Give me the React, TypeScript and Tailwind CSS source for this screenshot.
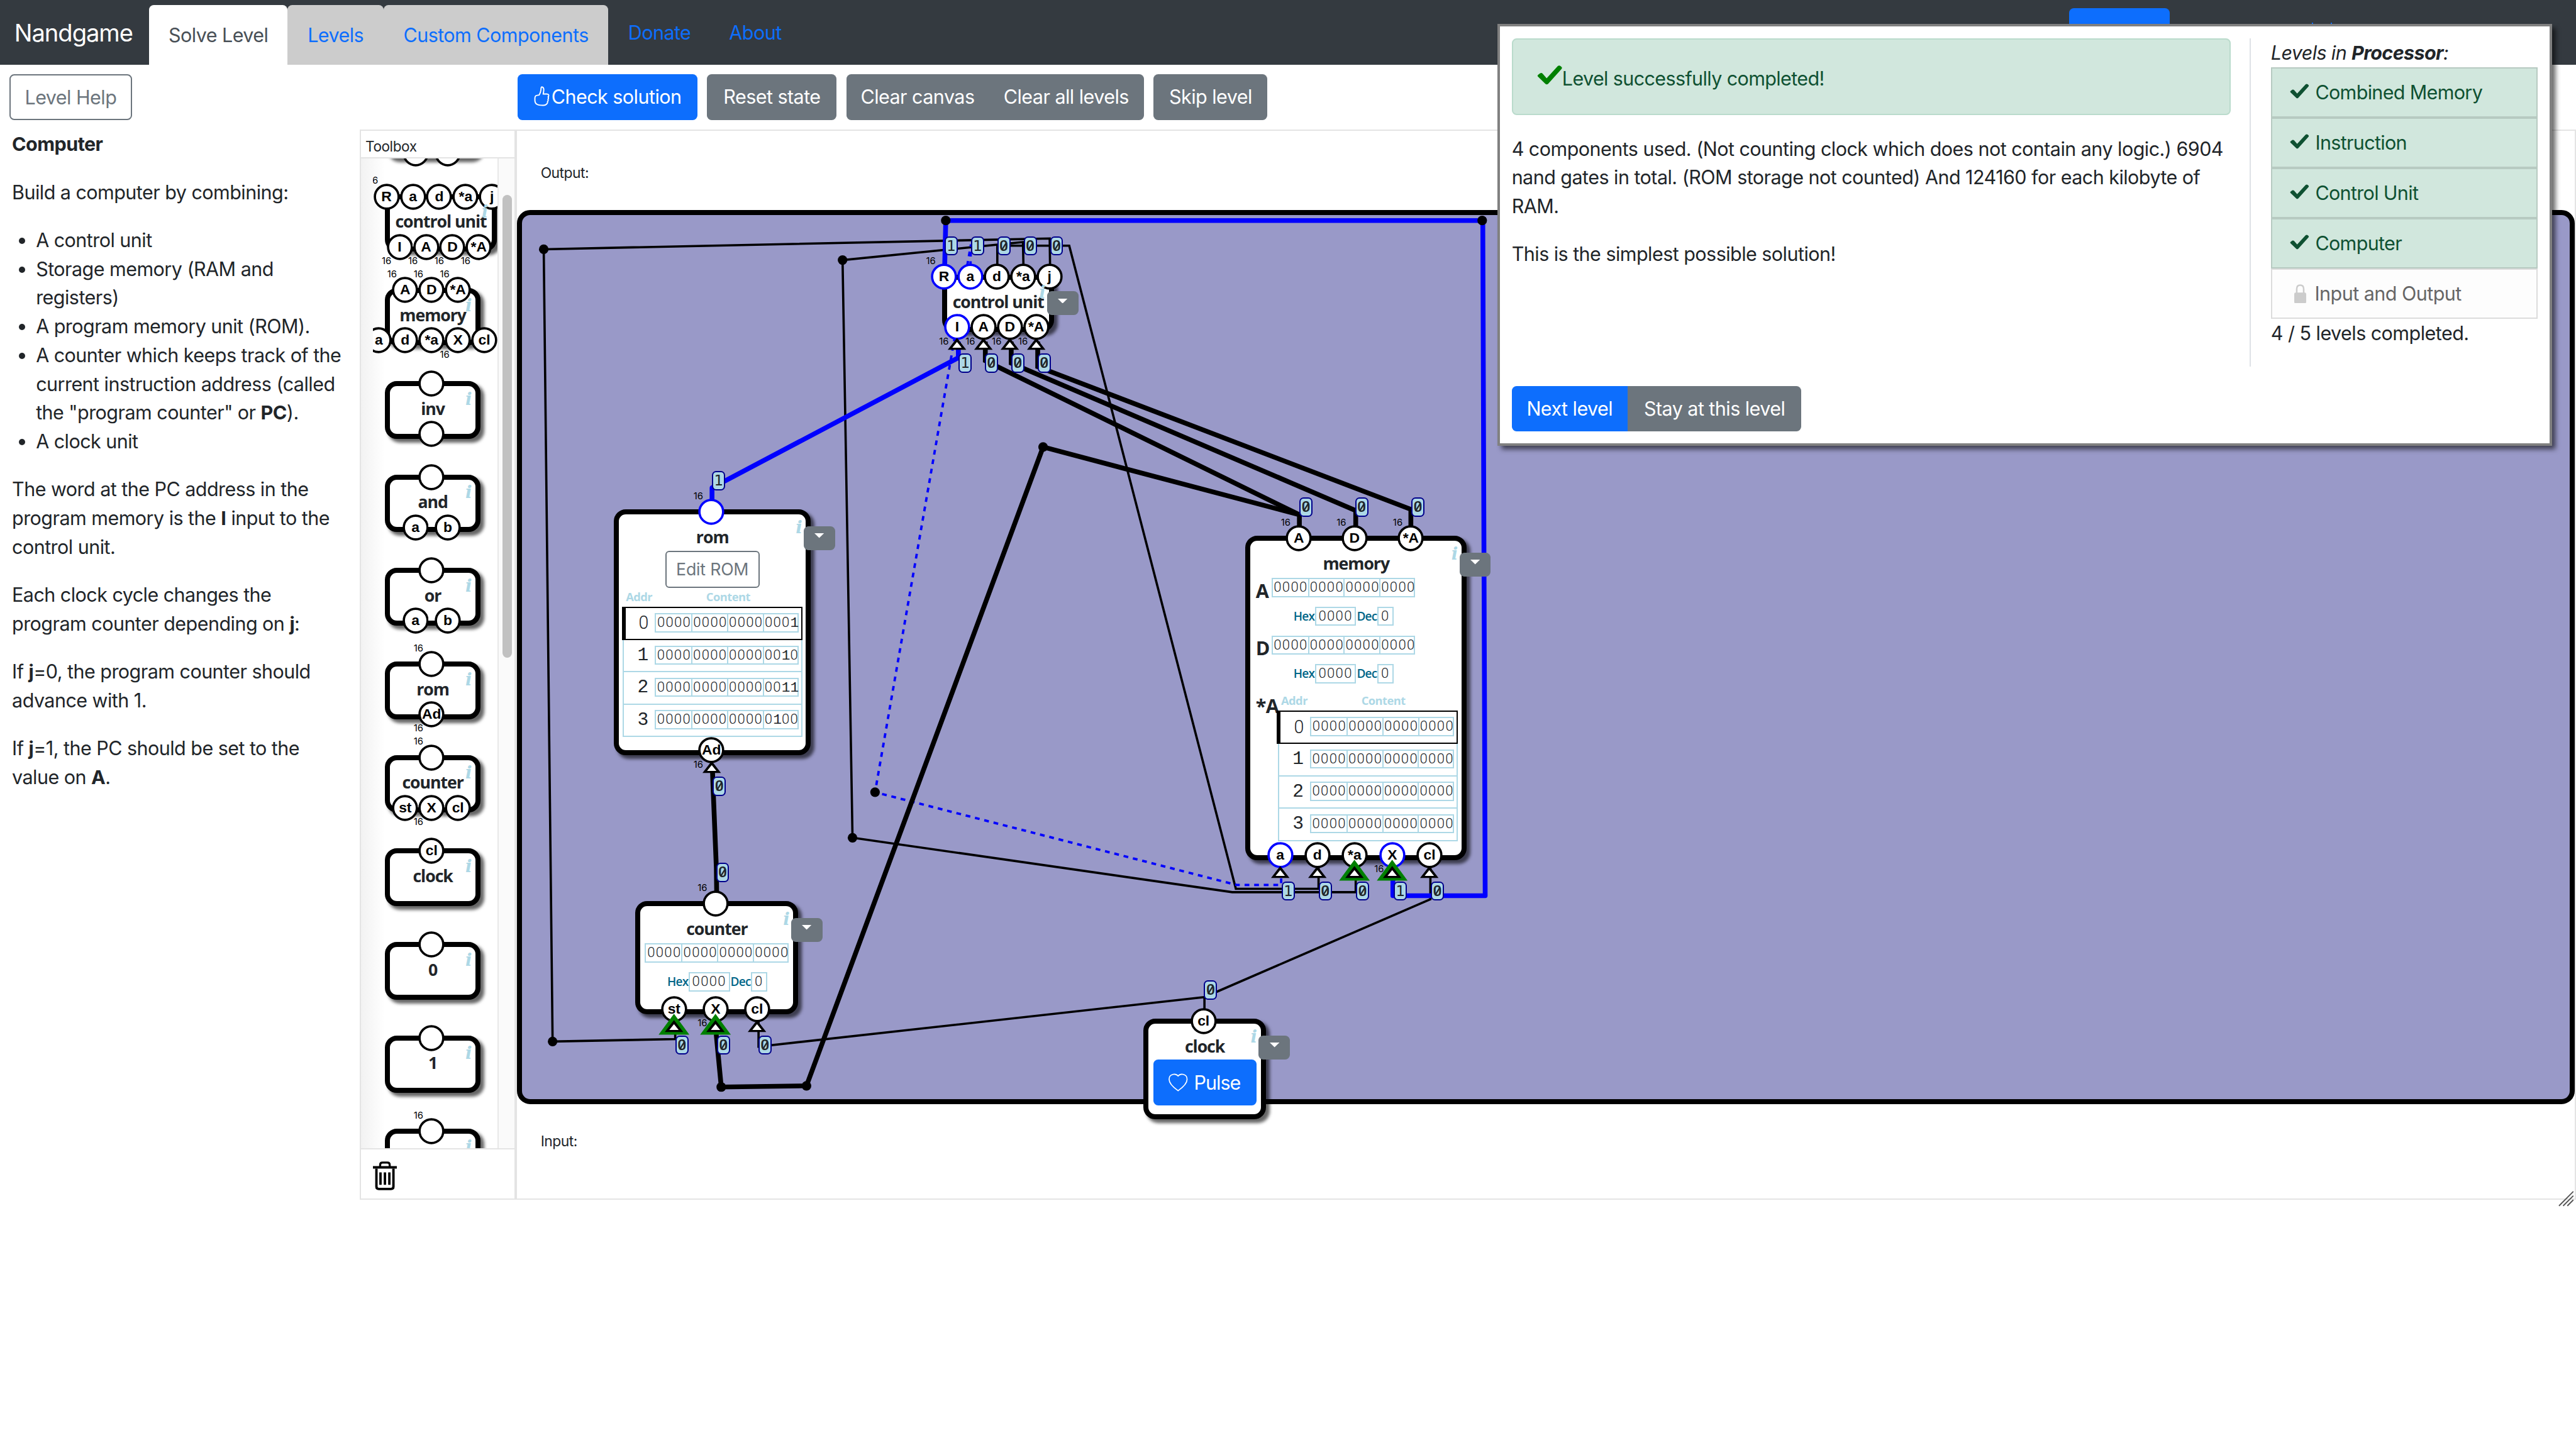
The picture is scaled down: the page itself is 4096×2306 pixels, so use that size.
import React from "react";

type Port = {
  x: number;
  label?: string;
  on?: boolean;
  wide?: boolean;
  badge?: string;
  arrow?: "plain" | "green";
};

function PortMark({ port, y, side }: { port: Port; y: number; side: "top" | "bottom" }) {
  const stroke = port.on ? "#0000ff" : "#000000";
  return (
    <div className="absolute tracking-normal" style={{ left: port.x, top: y }}>
      <div className="absolute -left-[11px] -top-[11px] h-[22px] w-[22px]">
        <svg viewBox="-11 -11 22 22" className="absolute inset-0 h-[22px] w-[22px]">
          <circle r="9.9" fill="#fff" stroke={stroke} strokeWidth="1.9" />
        </svg>
        {port.label && (
          <span className="absolute inset-x-[-4px] top-0 text-center font-['Liberation_Sans'] text-[12px] leading-[22px] font-bold text-black">
            {port.label}
          </span>
        )}
      </div>
      {port.wide && (
        <span
          className={
            side === "top"
              ? "absolute -left-[15px] -top-[18px] font-['Inter'] text-[7.8px] leading-[10px] text-black"
              : "absolute -left-[15px] top-[7px] font-['Inter'] text-[7.8px] leading-[10px] text-black"
          }
        >
          16
        </span>
      )}
      {port.arrow && (
        <svg viewBox="-14 0 28 24" className="absolute -left-[14px] top-0 h-[24px] w-[28px]">
          {port.arrow === "green" && <path d="M0 3.8 L12.8 21.3 H-12.8 Z" fill="#008000" />}
          <path d="M0 9 L7.7 19 H-7.7 Z" fill="#000" />
          <path d="M0 12.4 L3.9 17.3 H-3.9 Z" fill="#fff" />
        </svg>
      )}
      {port.badge && (
        <div
          className={
            side === "top"
              ? "absolute left-[0.4px] -top-[34px] h-[16px] w-[11px]"
              : "absolute left-[1.1px] top-[22px] h-[16px] w-[11px]"
          }
        >
          <div className="h-[16px] w-[11px] rounded-[3.5px] border-[1.1px] border-[#00008b] bg-[#add8e6] text-center font-['DejaVu_Sans_Mono'] text-[12.5px] leading-[14px] text-[#212529]">
            {port.badge === "0" ? (
              <span className="relative block font-['Roboto'] text-[13px] leading-[14px] font-medium">
                0
                <svg viewBox="0 0 9 14" className="absolute left-0 top-0 h-[14px] w-[9px]">
                  <path d="M2.5 10.4 L6.5 4" stroke="#212529" strokeWidth="1.2" />
                </svg>
              </span>
            ) : (
              port.badge
            )}
          </div>
        </div>
      )}
    </div>
  );
}

type BoxProps = {
  w: number;
  h: number;
  title: string;
  top?: Port[];
  bottom?: Port[];
  menu?: boolean;
  children?: React.ReactNode;
};

function ComponentBox({ w, h, title, top = [], bottom = [], menu, children }: BoxProps) {
  return (
    <div className="relative shrink-0" style={{ width: w, height: h }}>
      <div className="flex h-full w-full flex-col rounded-[10px] border-[4.2px] border-black bg-white pt-[9.2px] shadow-[3px_3px_3px_rgba(0,0,0,0.6)]">
        <div className="-mx-2 mb-[0.8px] text-center font-['Open_Sans'] text-[14px] leading-[19px] font-bold tracking-[-0.55px] whitespace-nowrap text-[#212529]">
          {title}
        </div>
        {children}
      </div>
      {top.map((p, i) => (
        <PortMark key={i} port={p} y={2} side="top" />
      ))}
      {bottom.map((p, i) => (
        <PortMark key={i} port={p} y={h - 4} side="bottom" />
      ))}
      <span className="absolute right-[7.5px] top-[5px] font-['DejaVu_Serif'] text-[14.5px] leading-[20px] font-bold text-[#add8e6] italic">
        i
      </span>
      {menu && (
        <div className="absolute -right-[20px] top-[14px] flex h-[20px] w-[26px] justify-center rounded-[4px] bg-[#6c757d] pt-[6px]">
          <svg viewBox="0 0 8 4" className="h-[4px] w-[8px]">
            <path d="M0 0 H8 L4 4 Z" fill="#fff" />
          </svg>
        </div>
      )}
    </div>
  );
}

function Digits({ value }: { value: string }) {
  const runs = value.match(/0+|[^0]+/g) ?? [];
  return (
    <>
      {runs.map((r, i) =>
        r[0] === "0" ? (
          <span key={i} className="font-['Roboto'] text-[11.6px] font-light tracking-[0.69px]">
            {r}
          </span>
        ) : (
          <span key={i} className="font-['Liberation_Mono'] text-[12px] font-normal tracking-normal">
            {r}
          </span>
        ),
      )}
    </>
  );
}

function Bits({ value }: { value: string }) {
  const groups = value.match(/.{4}/g) ?? [];
  return (
    <div className="flex h-[16px] w-[120px] border-[1.1px] border-[#add8e6] bg-white leading-[13px] text-[#212529]">
      {groups.map((g, i) => (
        <div
          key={i}
          className={
            i === 0
              ? "w-[29.8px] pl-[0.9px] whitespace-nowrap"
              : "w-[29.8px] border-l-[1.1px] border-[#add8e6] pl-[0.6px] whitespace-nowrap"
          }
        >
          <Digits value={g} />
        </div>
      ))}
    </div>
  );
}

function HexDec() {
  return (
    <div className="flex h-[16px] items-center font-['Open_Sans'] text-[10px] leading-[16px] font-semibold tracking-[-0.4px] text-[#006688]">
      <span className="w-[17.8px]">Hex</span>
      <span className="flex h-[16px] w-[34.5px] justify-center border-[1.1px] border-[#add8e6] leading-[13px] tracking-normal">
        <span className="text-[#212529]">
          <Digits value="0000" />
        </span>
      </span>
      <span className="w-[17.5px] pl-[0.5px]">Dec</span>
      <span className="flex h-[16px] w-[13.5px] justify-center border-[1.1px] border-[#add8e6] leading-[13px] tracking-normal">
        <span className="text-[#212529]">
          <Digits value="0" />
        </span>
      </span>
    </div>
  );
}

function MemoryTable({ rows }: { rows: string[] }) {
  return (
    <div className="w-[151px]">
      <div className="flex h-[14.6px] font-['Open_Sans'] text-[9.6px] leading-[13px] font-bold text-[#add8e6]">
        <span className="w-[27px] pl-[3.5px]">Addr</span>
        <span className="flex-1 pl-[43.5px]">Content</span>
      </div>
      {rows.map((v, i) => (
        <div
          key={i}
          className={
            i === 0
              ? "flex h-[28px] items-center border-[1.1px] border-l-[3.2px] border-black"
              : "ml-[1px] flex h-[27px] items-center border-x-[1.1px] border-b-[1.1px] border-[#add8e6]"
          }
        >
          <div
            className={
              i === 0
                ? "w-[24px] pr-[4.6px] text-right text-[#212529]"
                : "w-[25px] pr-[4.6px] text-right text-[#212529]"
            }
          >
            {i === 0 ? (
              <span className="font-['Roboto'] text-[15px] leading-[26px] font-light tracking-normal">0</span>
            ) : (
              <span className="font-['Liberation_Mono'] text-[15.5px] leading-[26px] tracking-normal">{i}</span>
            )}
          </div>
          <div className="-mt-[1px] ml-[0.5px]">
            <Bits value={v} />
          </div>
        </div>
      ))}
    </div>
  );
}

function Check({ className }: { className: string }) {
  return (
    <svg viewBox="0 0 21 16" className={className}>
      <path
        d="M.6 9.2 C.2 8.6 .6 8 1.2 7.6 L2.6 6.6 C3.4 6.1 4.1 6.2 4.7 6.9 L8 10.7 L17.2 .7 C18 -.1 18.8 -.1 19.5 .5 L20.3 1.2 C21 1.8 20.9 2.4 20.3 3.1 L9.3 15.3 C8.5 16.1 7.6 16.1 6.9 15.3 Z"
        fill="currentColor"
      />
    </svg>
  );
}

const thin = { fill: "none", stroke: "#000", strokeWidth: 1.9 };
const bus = { fill: "none", stroke: "#000", strokeWidth: 4 };
const busOn = { fill: "none", stroke: "#0000ff", strokeWidth: 4, strokeLinejoin: "round" as const };
const dashed = { fill: "none", stroke: "#0000ff", strokeWidth: 2, strokeDasharray: "4 4" };

const joints: [number, number][] = [
  [453.6, 208],
  [461, 869],
  [702.9, 217],
  [711.2, 699],
  [730, 661],
  [789, 184],
  [1236.5, 184],
  [870.2, 373],
  [672.8, 906],
  [601.7, 907],
];

function Wires() {
  return (
    <svg viewBox="0 0 2149 1210" className="absolute left-0 top-0 h-[1210px] w-[2149px]">
      <path {...thin} d="M876 222 L875.7 199 L453.6 208 L461 869 L563.3 867 V842" />
      <path {...thin} d="M853.8 222 L853.4 202 L702.9 217 L711.2 699 L1028 744.4 H1131 V713" />
      <path {...thin} d="M832 222 V205 H892 L1031 741.6 H1100 V713" />
      <path {...dashed} d="M809.6 222 L810 204 L730 661 L1031.7 738.4 H1068.8 V713" />
      <path {...thin} d="M1004.8 852 V832 L632.8 873.3 V842" />
      <path {...thin} d="M1004.8 832 L1193.3 750.3 V713" />
      <path {...bus} d="M594.3 640 L594.8 655 L597.6 724 L598 754" />
      <path {...bus} d="M822 285 V301 L1084 429.5 V449" />
      <path {...bus} d="M1084 429.5 L870.2 373 L672.8 906 L601.7 907 L597.5 863" />
      <path {...bus} d="M843.6 285 V303 L1131 426 V449" />
      <path {...bus} d="M865.7 285 V306 L1177 425 V449" />
      <path {...busOn} d="M788 226 L789 184 H1237 L1239 747.4 H1162 V713" />
      <path {...busOn} d="M799.5 285 V298.5 L594 407 V427" />
      {joints.map(([x, y]) => (
        <circle key={x} cx={x} cy={y} r="4" fill="#000" />
      ))}
    </svg>
  );
}

function Toolbox() {
  const blank: Port[] = [{ x: 39 }];
  const blank16: Port[] = [{ x: 39, wide: true }];
  const ab: Port[] = [
    { x: 25.5, label: "a" },
    { x: 52.5, label: "b" },
  ];
  return (
    <aside className="flex w-[130px] shrink-0 flex-col border-[1.1px] border-r-[1.1px] border-[#e4e4e4] bg-white">
      <div className="h-[23px] shrink-0 border-b-[1.1px] border-[#e4e4e4] pt-[4.5px] pl-[3.8px] text-[11.8px] leading-[18px] tracking-[-0.2px]">
        Toolbox
      </div>
      <div className="flex min-h-0 flex-1 bg-[linear-gradient(to_right,#f2f2f2,#ffffff_20px)]">
        <div className="ml-[10px] flex w-[104px] flex-col gap-[30px] overflow-hidden pl-[10px]">
          <div className="-mt-[48px]">
            <ComponentBox w={80} h={48} title="xor" top={blank} bottom={ab} />
          </div>
          <ComponentBox
            w={93.5}
            h={48}
            title="control unit"
            top={[
              { x: 1.4, label: "R", wide: true },
              { x: 23.4, label: "a" },
              { x: 45.4, label: "d" },
              { x: 67.4, label: "*a" },
              { x: 89.4, label: "j" },
            ]}
            bottom={[
              { x: 12.4, label: "I", wide: true },
              { x: 34.4, label: "A", wide: true },
              { x: 56.4, label: "D", wide: true },
              { x: 78.4, label: "*A", wide: true },
            ]}
          />
          <ComponentBox
            w={80}
            h={48}
            title="memory"
            top={[
              { x: 17, label: "A", wide: true },
              { x: 39, label: "D", wide: true },
              { x: 61, label: "*A", wide: true },
            ]}
            bottom={[
              { x: -5, label: "a" },
              { x: 17, label: "d" },
              { x: 39, label: "*a" },
              { x: 61, label: "X", wide: true },
              { x: 83, label: "cl" },
            ]}
          />
          <ComponentBox w={80} h={48} title="inv" top={blank} bottom={blank} />
          <ComponentBox w={80} h={48} title="and" top={blank} bottom={ab} />
          <ComponentBox w={80} h={48} title="or" top={blank} bottom={ab} />
          <ComponentBox w={80} h={48} title="rom" top={blank16} bottom={[{ x: 39, label: "Ad", wide: true }]} />
          <ComponentBox
            w={80}
            h={48}
            title="counter"
            top={blank16}
            bottom={[
              { x: 17, label: "st" },
              { x: 39, label: "X", wide: true },
              { x: 61, label: "cl" },
            ]}
          />
          <ComponentBox w={80} h={48} title="clock" top={[{ x: 39, label: "cl" }]} />
          <ComponentBox w={80} h={48} title="0" top={blank} />
          <ComponentBox w={80} h={48} title="1" top={blank} />
          <ComponentBox w={80} h={48} title="" top={blank16} />
        </div>
        <div className="flex-1 border-l-[1.1px] border-[#e8e8e8] bg-[#fafafa] pt-[30.4px] pl-[3px]">
          <div className="h-[386.3px] w-[8px] rounded-full bg-[#c1c1c1]" />
        </div>
      </div>
      <div className="h-[42px] shrink-0 border-t-[1.1px] border-[#e4e4e4] bg-white pt-[10px] pl-[10px]">
        <svg viewBox="0 0 20 24" className="h-[24px] w-[20px]" fill="none" stroke="#000">
          <path d="M0 5 H20" strokeWidth="2.2" />
          <path d="M6 4.5 V3 Q6 1 8 1 H12 Q14 1 14 3 V4.5" strokeWidth="1.7" />
          <path d="M2.9 6 V21 Q2.9 23 4.9 23 H15.1 Q17.1 23 17.1 21 V6" strokeWidth="2" />
          <path d="M6.3 9.2 V19.6 M10 9.2 V19.6 M13.7 9.2 V19.6" strokeWidth="2" />
        </svg>
      </div>
    </aside>
  );
}

function Node({ x, y, ...box }: BoxProps & { x: number; y: number }) {
  return (
    <div className="absolute" style={{ left: x, top: y }}>
      <ComponentBox {...box} menu />
    </div>
  );
}

function Circuit() {
  const zero = "0000000000000000";
  return (
    <div className="absolute -left-[431px] -top-[109px] h-[1210px] w-[2149px]">
      <Wires />
      <Node
        x={786}
        y={229}
        w={93.5}
        h={48}
        title="control unit"
        top={[
          { x: 1.5, label: "R", on: true, wide: true, badge: "1" },
          { x: 23.5, label: "a", on: true, badge: "1" },
          { x: 45.5, label: "d", badge: "0" },
          { x: 67.5, label: "*a", badge: "0" },
          { x: 89.5, label: "j", badge: "0" },
        ]}
        bottom={[
          { x: 12.4, label: "I", on: true, wide: true, badge: "1", arrow: "plain" },
          { x: 34.4, label: "A", wide: true, badge: "0", arrow: "plain" },
          { x: 56.4, label: "D", wide: true, badge: "0", arrow: "plain" },
          { x: 78.4, label: "*A", wide: true, badge: "0", arrow: "plain" },
        ]}
      />
      <Node
        x={512}
        y={425}
        w={164.5}
        h={205}
        title="rom"
        top={[{ x: 81.5, on: true, wide: true, badge: "1" }]}
        bottom={[{ x: 81.5, label: "Ad", wide: true, badge: "0", arrow: "plain" }]}
      >
        <div className="mx-auto mt-[1.3px] h-[31px] w-[78.5px] shrink-0 rounded-[3.2px] border-[1.1px] border-[#6c757d] text-center text-[14px] leading-[29px] tracking-[-0.1px] text-[#6c757d]">
          Edit ROM
        </div>
        <div className="mt-[1px] ml-[2.4px]">
          <MemoryTable rows={["0000000000000001", "0000000000000010", "0000000000000011", "0000000000000100"]} />
        </div>
      </Node>
      <Node
        x={530}
        y={752}
        w={136}
        h={94}
        title="counter"
        top={[{ x: 66.9, wide: true, badge: "0" }]}
        bottom={[
          { x: 32.3, label: "st", badge: "0", arrow: "green" },
          { x: 66.9, label: "X", wide: true, badge: "0", arrow: "green" },
          { x: 101.5, label: "cl", badge: "0", arrow: "plain" },
        ]}
      >
        <div className="mt-[2px] ml-[3.8px]">
          <Bits value={zero} />
        </div>
        <div className="mt-[8px] ml-[22.4px]">
          <HexDec />
        </div>
      </Node>
      <Node
        x={1039}
        y={447}
        w={184.5}
        h={270.5}
        title="memory"
        top={[
          { x: 44.5, label: "A", wide: true, badge: "0" },
          { x: 91, label: "D", wide: true, badge: "0" },
          { x: 138, label: "*A", wide: true, badge: "0" },
        ]}
        bottom={[
          { x: 29, label: "a", on: true, badge: "1", arrow: "plain" },
          { x: 60, label: "d", badge: "0", arrow: "plain" },
          { x: 91, label: "*a", badge: "0", arrow: "green" },
          { x: 122.5, label: "X", on: true, wide: true, badge: "1", arrow: "green" },
          { x: 153.5, label: "cl", badge: "0", arrow: "plain" },
        ]}
      >
        {["A", "D"].map((name) => (
          <div key={name} className="mt-[2px] flex h-[46px] shrink-0 font-['Open_Sans'] text-[#212529]">
            <span className="w-[17.4px] pt-[1.4px] pl-[4.4px] text-[16px] leading-[18px] font-bold">{name}</span>
            <div>
              <Bits value={zero} />
              <div className="mt-[8px] ml-[18.5px]">
                <HexDec />
              </div>
            </div>
          </div>
        ))}
        <div className="mt-[2px] flex">
          <span className="w-[22px] pt-[1.6px] pl-[4.4px] font-['Open_Sans'] text-[16px] leading-[18px] font-bold text-[#212529]">
            *A
          </span>
          <MemoryTable rows={[zero, zero, zero, zero]} />
        </div>
      </Node>
      <Node x={954} y={850} w={102} h={84} title="clock" top={[{ x: 50, label: "cl", badge: "0" }]}>
        <div className="mx-auto mt-[1px] flex h-[38px] w-[86px] shrink-0 items-center rounded-[4px] bg-[#0d6efd] pl-[13px] text-[16px] text-white">
          <svg viewBox="0 0 16 15" className="h-[15px] w-[16px]" fill="none" stroke="#fff" strokeWidth="0.9">
            <path d="M8 2.2 C10 -.2 15.5 .2 15.5 5 C15.5 9 11 12.4 8 14.5 C5 12.4 .5 9 .5 5 C.5 .2 6 -.2 8 2.2 Z" />
          </svg>
          <span className="ml-[5px] tracking-[-0.5px]">Pulse</span>
        </div>
      </Node>
    </div>
  );
}

function ResultDialog() {
  const done = ["Combined Memory", "Instruction", "Control Unit", "Computer"];
  return (
    <div className="absolute left-[1249px] top-[20px] flex h-[352px] w-[880px] flex-col border-[2.1px] border-[#808080] bg-white p-[10px] shadow-[3px_3px_4px_rgba(0,0,0,0.6)]">
      <div className="flex h-[274px]">
        <div className="w-[617px] border-r-[1.1px] border-[#dee2e6] pr-[16px]">
          <div className="flex h-[64px] items-center rounded-[4px] border-[1.1px] border-[#badbcc] bg-[#d1e7dd] pl-[20px] tracking-[-0.32px] text-[#0f5132]">
            <Check className="-mt-[3px] h-[16px] w-[21px] text-[#008000]" />
            <span className="mt-[3px]">Level successfully completed!</span>
          </div>
          <p className="mt-4 whitespace-nowrap">
            4 components used. (Not counting clock which does not contain any logic.) 6904
            <br />
            nand gates in total. (ROM storage not counted) And 124160 for each kilobyte of
            <br />
            RAM.
          </p>
          <p className="mt-4">This is the simplest possible solution!</p>
        </div>
        <div className="ml-[16.5px] w-[222.5px]">
          <div className="tracking-[-0.32px] italic">
            Levels in <b>Processor</b>:
          </div>
          {done.map((name) => (
            <div
              key={name}
              className="flex h-[42px] items-center border-[1.1px] border-[#b7cac1] bg-[#d1e7dd] pl-[15px] tracking-[-0.35px] text-[#0f5132]"
            >
              <Check className="-mt-[2px] mr-[5px] h-[12.5px] w-[16px]" />
              {name}
            </div>
          ))}
          <div className="flex h-[42px] items-center border-[1.1px] border-[#dcdcdc] bg-[#fdfdfd] pl-[18px] text-[#666]">
            <svg viewBox="0 0 11 16" className="mr-[6.5px] h-[16px] w-[11px]">
              <path d="M2.6 8 V4 Q2.6 .8 5.5 .8 Q8.4 .8 8.4 4 V8" fill="none" stroke="#ccc" strokeWidth="1.3" />
              <rect x="0.5" y="7" width="10" height="9" rx="1.3" fill="#ccc" />
            </svg>
            Input and Output
          </div>
          <div>4 / 5 levels completed.</div>
        </div>
      </div>
      <div className="mt-4 flex h-[38px] leading-[38px] text-white">
        <div className="w-[96.7px] rounded-l-[4px] bg-[#0d6efd] text-center">Next level</div>
        <div className="w-[145px] rounded-r-[4px] bg-[#6c757d] text-center">Stay at this level</div>
      </div>
    </div>
  );
}

export default function App() {
  return (
    <div className="relative h-[1210px] w-[2149px] overflow-hidden bg-white font-['Inter',sans-serif] text-[16px] leading-6 tracking-[-0.28px] text-[#212529] [zoom:1.906]">
      <nav className="flex h-[54px] bg-[#343a40] text-[#0d6efd]">
        <div className="w-[124.3px] pl-[12px] text-[20px] leading-[55px] tracking-[-0.55px] text-white">Nandgame</div>
        <div className="mt-1 w-[115.7px] rounded-t-[4px] bg-white text-center leading-[50px] text-[#495057]">
          Solve Level
        </div>
        <div className="mt-1 w-[80px] rounded-t-[4px] bg-[#ccc] text-center leading-[50px]">Levels</div>
        <div className="mt-1 w-[187.5px] rounded-t-[4px] bg-[#ccc] text-center leading-[50px]">Custom Components</div>
        <div className="ml-[16.5px] leading-[55px]">Donate</div>
        <div className="ml-[32px] leading-[55px]">About</div>
        <div className="absolute left-[1726px] top-[7px] h-[38px] w-[84px] rounded-[4px] bg-[#0d6efd]" />
        <div className="absolute left-[1928.5px] top-[19px] flex h-[1px] w-[17px] justify-between">
          <span className="w-[1px] bg-[#0d6efd]" />
          <span className="w-[1px] bg-[#0d6efd]" />
        </div>
      </nav>
      <div className="flex h-[54px] items-center gap-2 px-2 text-center leading-[38px] text-white">
        <div className="mr-[314px] h-[38px] w-[102px] rounded-[4px] border-[1.1px] border-[#6c757d] leading-[37px] text-[#6c757d]">
          Level Help
        </div>
        <div className="flex h-[38px] w-[150px] items-center justify-center rounded-[4px] bg-[#0d6efd]">
          <svg
            viewBox="0 0 13 17"
            className="mr-[1.5px] -mt-[1px] h-[17px] w-[13px]"
            fill="none"
            stroke="#fff"
            strokeWidth="1"
            strokeLinejoin="round"
          >
            <path d="M4.3 7.4 C5.6 5.6 5.9 3.4 6 1.4 Q6.1 .6 7 .7 Q8.3 1.2 8.2 3.2 Q8.1 5 7.7 6.6 H11 Q12.5 6.7 12.3 8 Q12.2 8.7 11.8 9 Q12.5 9.8 11.7 11 Q12.2 12 11.3 13 Q11.6 14 10.8 14.7 Q9.8 16.2 7.4 16 Q4 16 2.6 15.2 Q.9 14.4 .8 12 V10 Q.9 7.9 2.6 7.7 Z" />
          </svg>
          Check solution
        </div>
        <div className="h-[38px] w-[108px] rounded-[4px] bg-[#6c757d]">Reset state</div>
        <div className="flex h-[38px] w-[248.5px] rounded-[4px] bg-[#6c757d]">
          <span className="w-[119px]">Clear canvas</span>
          <span className="w-[129px]">Clear all levels</span>
        </div>
        <div className="h-[38px] w-[95px] rounded-[4px] bg-[#6c757d]">Skip level</div>
      </div>
      <main className="flex h-[893px]">
        <section className="w-[300px] shrink-0 pt-[0.3px] pl-[10px] whitespace-nowrap">
          <h1 className="font-bold">Computer</h1>
          <p className="mt-4">Build a computer by combining:</p>
          <ul className="mt-4 list-disc pl-[20px]">
            <li>A control unit</li>
            <li>
              Storage memory (RAM and
              <br />
              registers)
            </li>
            <li>A program memory unit (ROM).</li>
            <li>
              A counter which keeps track of the
              <br />
              current instruction address (called
              <br />
              the "program counter" or <b>PC</b>).
            </li>
            <li>A clock unit</li>
          </ul>
          <p className="mt-4">
            The word at the PC address in the
            <br />
            program memory is the <b>I</b> input to the
            <br />
            control unit.
          </p>
          <p className="mt-4">
            Each clock cycle changes the
            <br />
            program counter depending on <b>j</b>:
          </p>
          <p className="mt-4">
            If <b>j</b>=0, the program counter should
            <br />
            advance with 1.
          </p>
          <p className="mt-4">
            If <b>j</b>=1, the PC should be set to the
            <br />
            value on <b>A</b>.
          </p>
        </section>
        <Toolbox />
        <section className="relative flex-1 border-[1.1px] border-[#e4e4e4] text-[12px]">
          <div className="h-[66px] pt-[23.7px] pl-[20px]">Output:</div>
          <div className="h-[746px] w-[1717px] rounded-[11px] border-[4.2px] border-black bg-[#9999c8]" />
          <div className="pt-[19.6px] pl-[20px]">Input:</div>
          <svg
            viewBox="0 0 14 14"
            className="absolute right-0 -bottom-[7px] h-[14px] w-[14px]"
            stroke="#555"
            strokeWidth="1"
          >
            <path d="M1 13 L13 1 M4.5 13 L13 4.5 M8 13 L13 8" />
          </svg>
          <Circuit />
        </section>
      </main>
      <ResultDialog />
    </div>
  );
}
